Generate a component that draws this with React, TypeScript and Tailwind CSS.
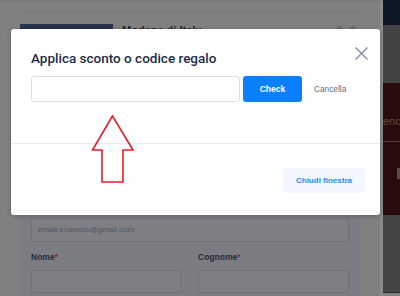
const font = { fontFamily: '"Liberation Sans", Arial, sans-serif' };

export default function App() {
    return (
        <div className="relative w-[400px] h-[296px] overflow-hidden bg-[#808080] flex" style={font}>
            {/* page behind the overlay */}
            <div className="w-[380px] shrink-0 flex flex-col">
                <div className="h-[2px] bg-[#7a7a7a]" />
                <div className="mx-[20px] mt-[10px] border-t border-[#777777]" />
                <div className="mx-[20px] mt-[11px] flex items-start">
                    <div className="w-[93px] h-[20px] bg-[#29334b]" />
                    <p className="ml-[9px] mt-[1px] text-[11px] leading-none font-bold text-[#1f2533]">Modena di Italy</p>
                    <div className="ml-auto mr-[4px] mt-[2px] flex gap-[8px]">
                        <div className="w-[5px] h-[5px] rounded-full bg-[#666a70]" />
                        <div className="w-[6px] h-[6px] rounded-full bg-[#666a70]" />
                    </div>
                </div>
                <div className="mx-[20px] mt-[130px] flex-1 bg-[#7c7d82] px-[11px] pt-[44px]">
                    <div className="h-[24px] rounded-[3px] border border-[#6f7176] bg-[#7e7f83] px-[6px] flex items-center text-[8px] text-[#52565c]">
                        email.example@gmail.com
                    </div>
                    <div className="mt-[10px] grid grid-cols-2 gap-[16px]">
                        <div>
                            <p className="text-[8.5px] leading-[10px] font-semibold text-[#262b36]">Nome<span className="text-[#8a2b2b]">*</span></p>
                            <div className="mt-[8px] h-[23px] rounded-[3px] border border-[#6f7176] bg-[#7e7f83]" />
                        </div>
                        <div>
                            <p className="text-[8.5px] leading-[10px] font-semibold text-[#262b36]">Cognome<span className="text-[#8a2b2b]">*</span></p>
                            <div className="mt-[8px] h-[23px] rounded-[3px] border border-[#6f7176] bg-[#7e7f83]" />
                        </div>
                    </div>
                </div>
            </div>
            <div className="w-[3px] shrink-0 bg-[#8a8a8a]" />
            <div className="flex-1 flex flex-col">
                <div className="h-[25px] bg-[#0c1824]" />
                <div className="h-[58px] bg-[#434343]" />
                <div className="h-[59px] bg-[#2b0a0c] border-b border-[#5a3a3d] overflow-hidden">
                    <p className="mt-[30px] text-[11px] text-[#5e4a4c] whitespace-nowrap">enc</p>
                </div>
                <div className="h-[73px] bg-[#2b0a0c] flex justify-end pt-[26px]">
                    <div className="w-[4px] h-[11px] bg-[#5a4a4c]" />
                </div>
                <div className="flex-1 bg-[#444444] border-b border-[#2a2a2a] mb-[3px]" />
            </div>

            {/* modal */}
            <div className="absolute left-[11px] top-[29px] w-[369px] h-[186px] bg-white rounded-[3px] shadow-[0_1px_4px_rgba(0,0,0,0.25)] flex flex-col">
                <div className="flex items-start justify-between pl-[20px] pr-[12px] pt-[18px]">
                    <h2 className="mt-[3px] text-[13.5px] leading-[16px] font-medium text-[#1d2c48]" style={{ fontFamily: 'Roboto, "Liberation Sans", sans-serif' }}>
                        Applica sconto o codice regalo
                    </h2>
                    <svg width="13" height="13" viewBox="0 0 13 13" fill="none" stroke="#7889a2" strokeWidth="1.2">
                        <path d="M0.5 0.5 L12.5 12.5 M12.5 0.5 L0.5 12.5" />
                    </svg>
                </div>
                <div className="mt-[10px] pl-[20px] flex items-center">
                    <div className="w-[209px] h-[26px] rounded-[3px] border border-[#d8dee7] bg-white" />
                    <button className="ml-[3px] w-[59px] h-[26px] rounded-[3px] bg-[#0a80ff] text-white text-[8.5px] font-bold">Check</button>
                    <span className="ml-[12px] text-[8.3px] text-[#5f6b7b]">Cancella</span>
                </div>
                <div className="mt-[41px] border-t border-[#e8ecf0]" />
                <div className="mt-[24px] flex justify-end pr-[15px]">
                    <button className="w-[82px] h-[25px] rounded-[3px] bg-[#f2f7fd] text-[8px] font-bold text-[#1d8cf0]">Chiudi finestra</button>
                </div>
            </div>

            {/* annotation arrow */}
            <svg className="absolute left-[90px] top-[114px]" width="46" height="70" viewBox="0 0 46 70" fill="none">
                <path d="M22.5 2 L2.5 36 L12 36 L12 68 L33 68 L33 36 L43 36 Z" stroke="#ec1c24" strokeWidth="1.6" strokeLinejoin="miter" />
            </svg>
        </div>
    );
}
